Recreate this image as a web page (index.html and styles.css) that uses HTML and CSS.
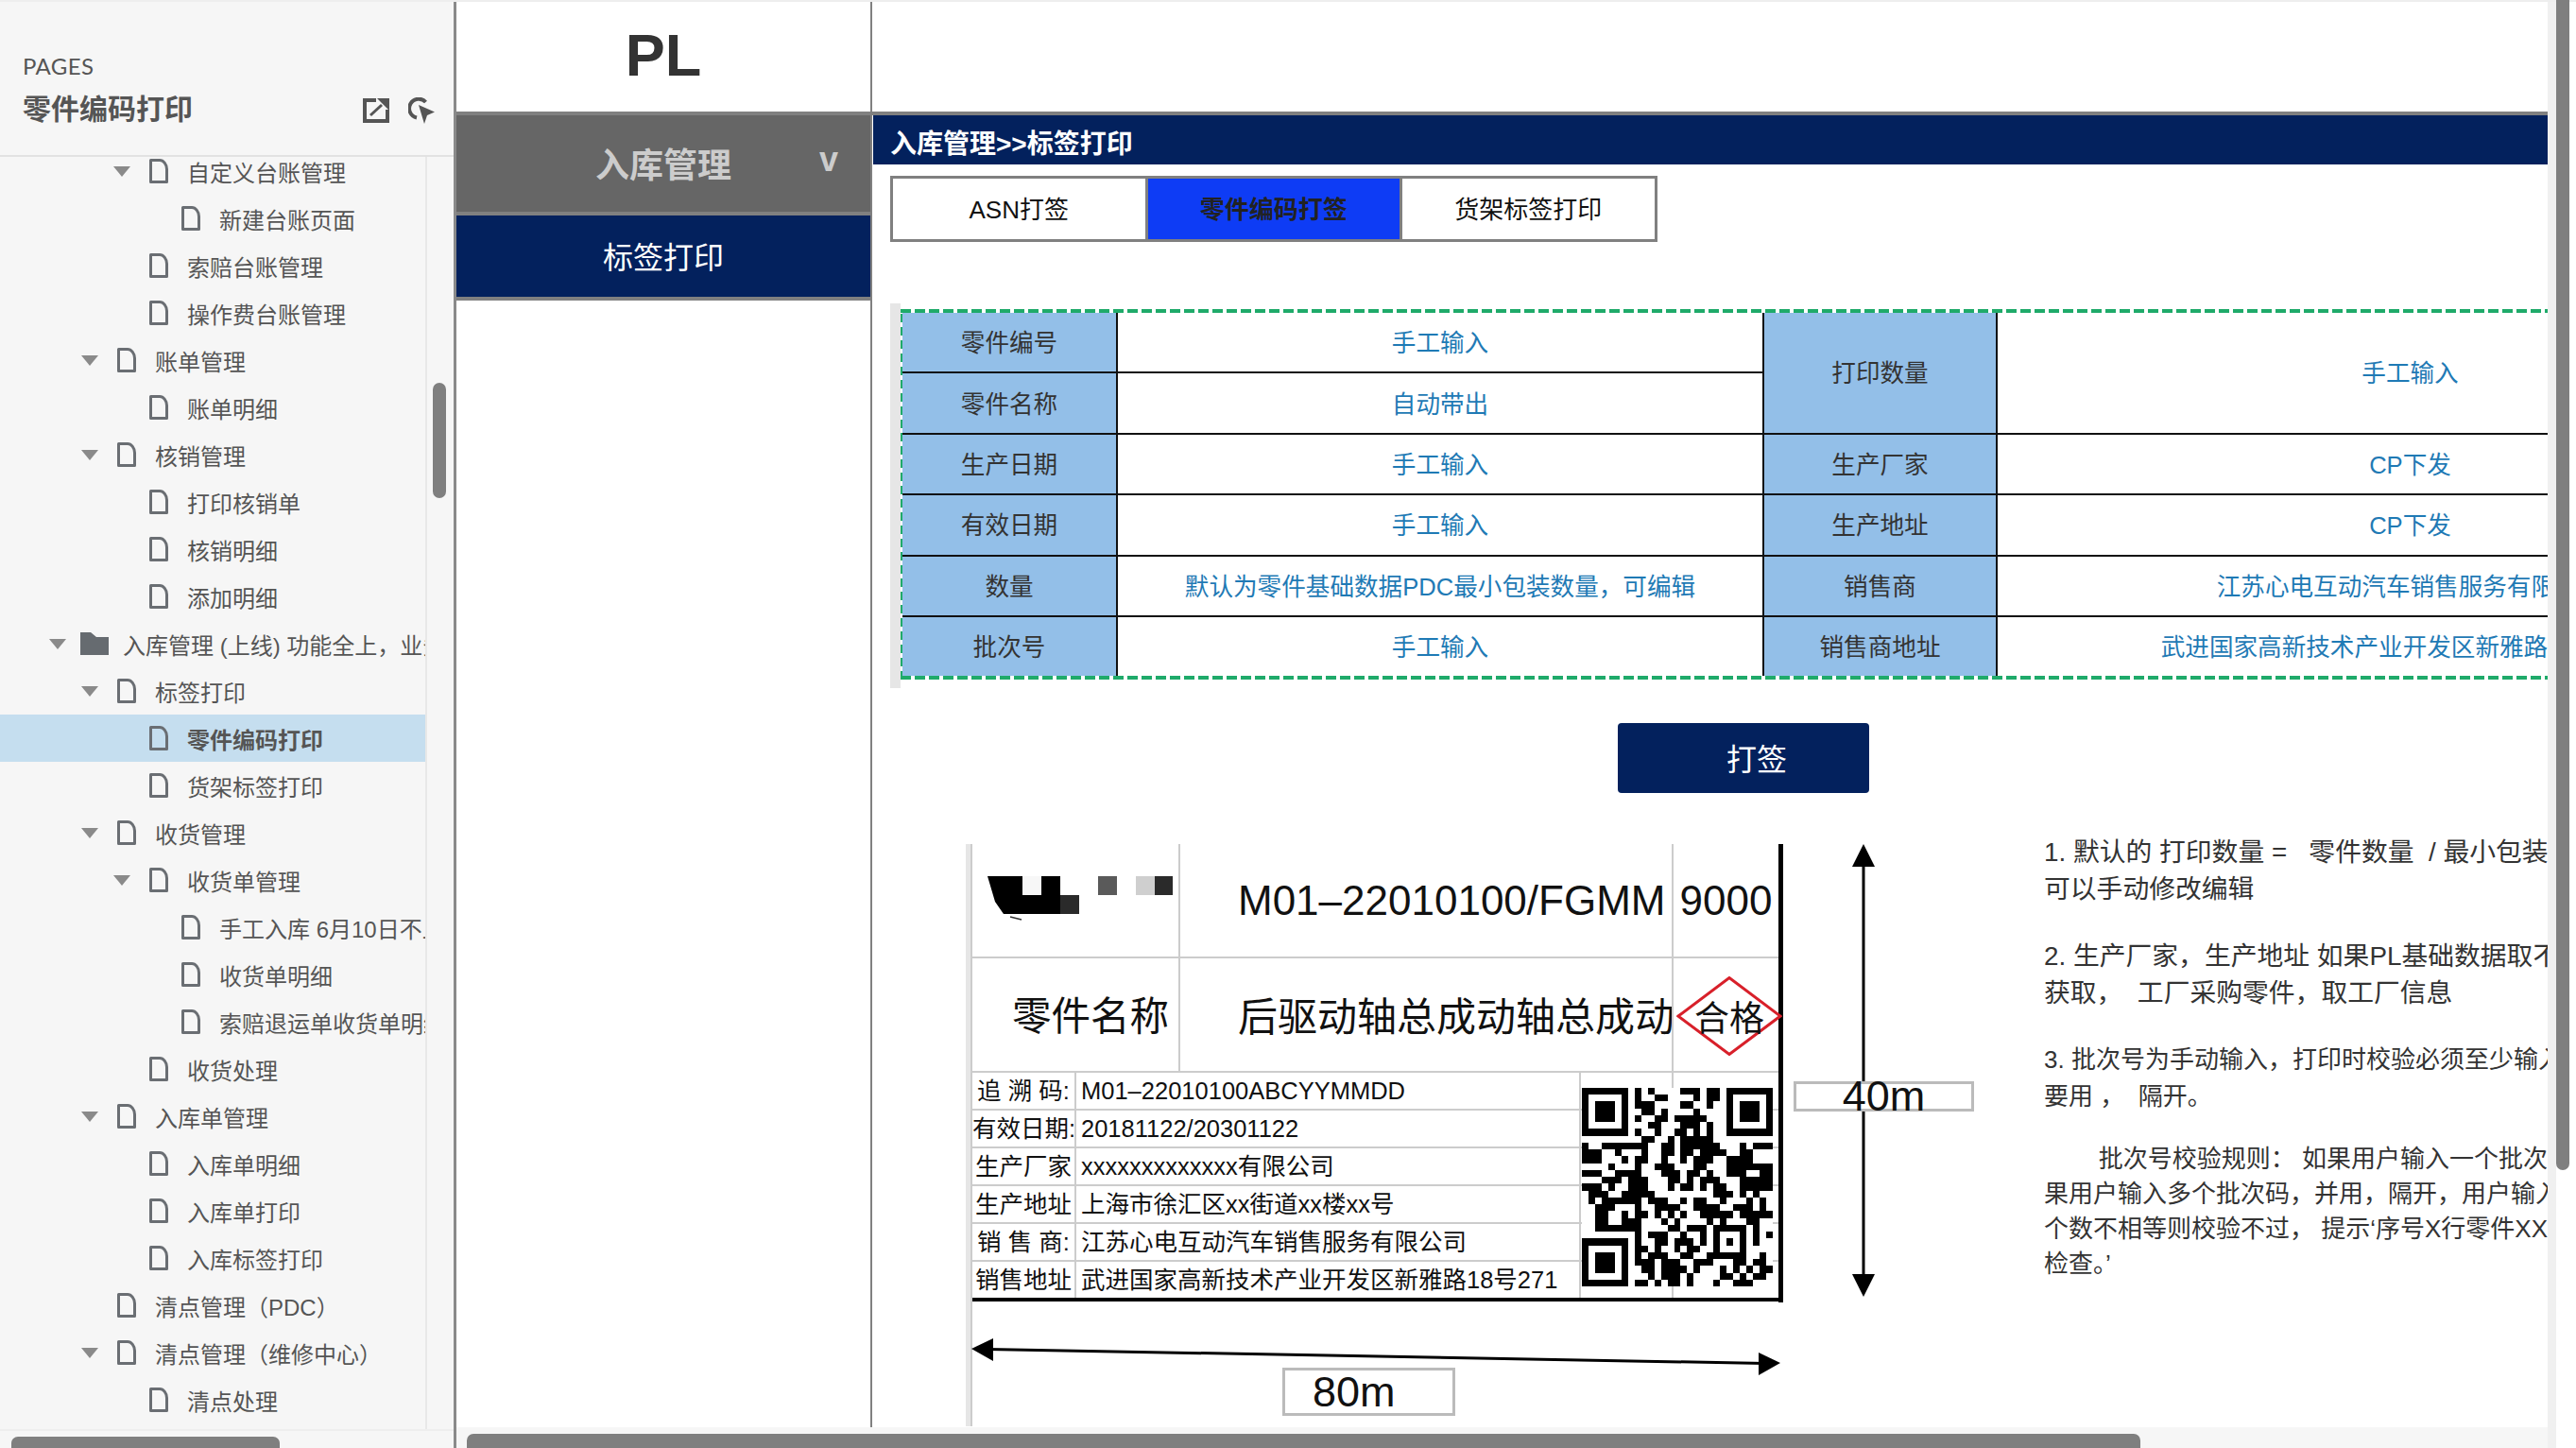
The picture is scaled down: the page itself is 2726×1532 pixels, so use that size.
FILE: index.html
```html
<!DOCTYPE html>
<html lang="zh-CN">
<head>
  <meta charset="UTF-8">
  <title>零件编码打印</title>
  <link rel="stylesheet" href="styles.css">
</head>
<body>
  <svg class="defs" width="0" height="0">
    <symbol id="file" viewBox="0 0 20 26">
      <path d="M1.5 1.5H11C15 1.5 18.5 6 18.5 11V24.5H1.5Z" fill="none" stroke="#6a6e73" stroke-width="3" stroke-linejoin="round"/>
    </symbol>
    <symbol id="folder" viewBox="0 0 30 24">
      <path d="M0 0H11L17 5H30V24H0Z" fill="#666b70"/>
    </symbol>
  </svg>

  <div class="app">
    <!-- Pages panel -->
    <aside class="pages">
      <div class="pages-head">
        <div class="pages-label">PAGES</div>
        <div class="pages-title-row">
          <div class="pages-title">零件编码打印</div>
          <svg class="head-icon" width="28" height="26" viewBox="0 0 28 26">
            <path d="M14 2H2V24H26V12" fill="none" stroke="#555" stroke-width="4"/>
            <path d="M15 0H28V13Z" fill="#555"/>
            <path d="M8 18L20 7" stroke="#555" stroke-width="3"/>
          </svg>
          <svg class="head-icon" width="28" height="28" viewBox="0 0 28 28">
            <path d="M18.5 5A10 10 0 1 0 9 21.5" fill="none" stroke="#555" stroke-width="4"/>
            <path d="M11 8L28 15.5L20 19L17 28Z" fill="#555"/>
          </svg>
        </div>
      </div>
      <div class="tree-box">
        <div class="tree">
          <div class="row l3"><i class="caret"></i><svg class="ico"><use href="#file"/></svg><span>自定义台账管理</span></div>
          <div class="row l4"><i class="slot"></i><svg class="ico"><use href="#file"/></svg><span>新建台账页面</span></div>
          <div class="row l3"><i class="slot"></i><svg class="ico"><use href="#file"/></svg><span>索赔台账管理</span></div>
          <div class="row l3"><i class="slot"></i><svg class="ico"><use href="#file"/></svg><span>操作费台账管理</span></div>
          <div class="row l2"><i class="caret"></i><svg class="ico"><use href="#file"/></svg><span>账单管理</span></div>
          <div class="row l3"><i class="slot"></i><svg class="ico"><use href="#file"/></svg><span>账单明细</span></div>
          <div class="row l2"><i class="caret"></i><svg class="ico"><use href="#file"/></svg><span>核销管理</span></div>
          <div class="row l3"><i class="slot"></i><svg class="ico"><use href="#file"/></svg><span>打印核销单</span></div>
          <div class="row l3"><i class="slot"></i><svg class="ico"><use href="#file"/></svg><span>核销明细</span></div>
          <div class="row l3"><i class="slot"></i><svg class="ico"><use href="#file"/></svg><span>添加明细</span></div>
          <div class="row l1"><i class="caret"></i><svg class="ico-folder"><use href="#folder"/></svg><span>入库管理 (上线) 功能全上，业务</span></div>
          <div class="row l2"><i class="caret"></i><svg class="ico"><use href="#file"/></svg><span>标签打印</span></div>
          <div class="row l3 selected"><i class="slot"></i><svg class="ico"><use href="#file"/></svg><span>零件编码打印</span></div>
          <div class="row l3"><i class="slot"></i><svg class="ico"><use href="#file"/></svg><span>货架标签打印</span></div>
          <div class="row l2"><i class="caret"></i><svg class="ico"><use href="#file"/></svg><span>收货管理</span></div>
          <div class="row l3"><i class="caret"></i><svg class="ico"><use href="#file"/></svg><span>收货单管理</span></div>
          <div class="row l4"><i class="slot"></i><svg class="ico"><use href="#file"/></svg><span>手工入库 6月10日不上线</span></div>
          <div class="row l4"><i class="slot"></i><svg class="ico"><use href="#file"/></svg><span>收货单明细</span></div>
          <div class="row l4"><i class="slot"></i><svg class="ico"><use href="#file"/></svg><span>索赔退运单收货单明细</span></div>
          <div class="row l3"><i class="slot"></i><svg class="ico"><use href="#file"/></svg><span>收货处理</span></div>
          <div class="row l2"><i class="caret"></i><svg class="ico"><use href="#file"/></svg><span>入库单管理</span></div>
          <div class="row l3"><i class="slot"></i><svg class="ico"><use href="#file"/></svg><span>入库单明细</span></div>
          <div class="row l3"><i class="slot"></i><svg class="ico"><use href="#file"/></svg><span>入库单打印</span></div>
          <div class="row l3"><i class="slot"></i><svg class="ico"><use href="#file"/></svg><span>入库标签打印</span></div>
          <div class="row l2"><i class="slot"></i><svg class="ico"><use href="#file"/></svg><span>清点管理（PDC）</span></div>
          <div class="row l2"><i class="caret"></i><svg class="ico"><use href="#file"/></svg><span>清点管理（维修中心）</span></div>
          <div class="row l3"><i class="slot"></i><svg class="ico"><use href="#file"/></svg><span>清点处理</span></div>
        </div>
        <div class="tree-thumb"></div>
      </div>
      <div class="pages-foot"><div class="pages-foot-thumb"></div></div>
    </aside>

    <div class="canvas">
      <div class="canvas-body">
        <!-- Left menu of the page -->
        <nav class="menu">
          <div class="menu-logo">PL</div>
          <div class="menu-group">入库管理<span class="menu-arrow">v</span></div>
          <div class="menu-item">标签打印</div>
        </nav>

        <main class="main">
          <div class="main-top"></div>
          <div class="crumb">入库管理&gt;&gt;标签打印</div>
          <div class="tabs">
            <div class="tab">ASN打签</div>
            <div class="tab active">零件编码打签</div>
            <div class="tab">货架标签打印</div>
          </div>

          <div class="sheet">
            <div class="sheet-dash">
              <table class="sheet-table">
                <colgroup>
                  <col class="c1"><col class="c2"><col class="c3"><col class="c4">
                </colgroup>
                <tr><th>零件编号</th><td>手工输入</td><th rowspan="2">打印数量</th><td rowspan="2">手工输入</td></tr>
                <tr><th>零件名称</th><td>自动带出</td></tr>
                <tr><th>生产日期</th><td>手工输入</td><th>生产厂家</th><td>CP下发</td></tr>
                <tr><th>有效日期</th><td>手工输入</td><th>生产地址</th><td>CP下发</td></tr>
                <tr><th>数量</th><td>默认为零件基础数据PDC最小包装数量，可编辑</td><th>销售商</th><td>江苏心电互动汽车销售服务有限公司</td></tr>
                <tr><th>批次号</th><td>手工输入</td><th>销售商地址</th><td>武进国家高新技术产业开发区新雅路18号271&nbsp;&nbsp;&nbsp;</td></tr>
              </table>
            </div>
          </div>

          <div class="print-row"><button class="print-btn">打签</button></div>

          <div class="lower">
            <div class="label-rail">
              <div class="label-line">
                <div class="label">
                  <div class="label-top">
                    <div class="lt-cell">
                      <svg class="mosaic" width="200" height="52" viewBox="0 0 200 52">
                        <path d="M0 0H37V20H17V40L8 27Z" fill="#000"/>
                        <rect x="17" y="20" width="60" height="20" fill="#000"/>
                        <rect x="37" y="0" width="20" height="20" fill="#f7f7f7"/>
                        <rect x="57" y="0" width="20" height="20" fill="#000"/>
                        <rect x="77" y="20" width="20" height="20" fill="#2a2a2a"/>
                        <rect x="117" y="0" width="20" height="20" fill="#5a5a5a"/>
                        <rect x="157" y="0" width="20" height="20" fill="#cfcfcf"/>
                        <path d="M177 0H196V20H177Z" fill="#2a2a2a"/>
                        <path d="M24 43L36 46" stroke="#333" stroke-width="1.5"/>
                      </svg>
                    </div>
                    <div class="lt-cell big pad">M01–22010100/FGMM</div>
                    <div class="lt-cell big center">9000</div>
                  </div>
                  <div class="label-top">
                    <div class="lt-cell name-cap">零件名称</div>
                    <div class="lt-cell name pad">后驱动轴总成动轴总成动</div>
                    <div class="lt-cell"></div>
                  </div>
                  <div class="lr"><div>追 溯 码:</div><div>M01–22010100ABCYYMMDD</div><div></div><div></div></div>
                  <div class="lr"><div>有效日期:</div><div>20181122/20301122</div><div></div><div></div></div>
                  <div class="lr"><div>生产厂家</div><div>xxxxxxxxxxxxx有限公司</div><div></div><div></div></div>
                  <div class="lr"><div>生产地址</div><div>上海市徐汇区xx街道xx楼xx号</div><div></div><div></div></div>
                  <div class="lr"><div>销 售 商:</div><div>江苏心电互动汽车销售服务有限公司</div><div></div><div></div></div>
                  <div class="lr last"><div>销售地址</div><div>武进国家高新技术产业开发区新雅路18号271</div><div></div><div></div></div>

                  <div class="stamp">
                    <svg width="112" height="84" viewBox="0 0 112 84"><path d="M2 42L56 1.5L110 42L56 82.5Z" fill="#fff" stroke="#d8202a" stroke-width="3"/></svg>
                    <span>合格</span>
                  </div>

                  <svg class="qr" viewBox="0 0 29 29" preserveAspectRatio="none" shape-rendering="crispEdges">
                    <path fill-rule="evenodd" d="M0 0h7v7h-7zM1 1v5h5v-5zM2 2h3v3h-3zM22 0h7v7h-7zM23 1v5h5v-5zM24 2h3v3h-3zM0 22h7v7h-7zM1 23v5h5v-5zM2 24h3v3h-3z"/>
                    <path fill="none" stroke="#000" d="M8 .5h1M10 .5h1M15 .5h3M19 .5h2M8 1.5h1M11 1.5h2M17 1.5h1M19 1.5h2M8 2.5h3M15 2.5h2M19 2.5h1M9 3.5h2M12 3.5h1M17 3.5h1M8 4.5h1M11 4.5h2M14 4.5h5M10 5.5h2M15 5.5h3M19 5.5h1M8 6.5h1M11 6.5h1M14 6.5h2M17 6.5h1M19 6.5h1M9 7.5h2M13 7.5h1M15 7.5h5M0 8.5h1M3 8.5h7M12 8.5h2M15 8.5h6M24 8.5h1M26 8.5h3M0 9.5h3M5 9.5h1M9 9.5h1M12 9.5h2M15 9.5h2M18 9.5h4M24 9.5h2M0 10.5h3M6 10.5h1M8 10.5h2M12 10.5h1M15 10.5h1M17 10.5h3M22 10.5h4M4 11.5h1M8 11.5h1M11 11.5h3M17 11.5h2M22 11.5h7M0 12.5h3M5 12.5h4M12 12.5h3M16 12.5h2M19 12.5h1M22 12.5h3M27 12.5h2M3 13.5h3M7 13.5h3M13 13.5h2M16 13.5h1M18 13.5h3M24 13.5h5M0 14.5h3M4 14.5h1M7 14.5h3M13 14.5h1M15 14.5h2M18 14.5h1M20 14.5h2M24 14.5h5M1 15.5h3M6 15.5h5M20 15.5h3M24 15.5h1M26 15.5h1M1 16.5h1M3 16.5h6M10 16.5h3M15 16.5h1M17 16.5h2M21 16.5h1M25 16.5h1M27 16.5h1M2 17.5h3M8 17.5h1M11 17.5h4M17 17.5h4M23 17.5h3M27 17.5h1M2 18.5h2M6 18.5h1M8 18.5h2M11 18.5h1M13 18.5h1M15 18.5h1M18 18.5h5M24 18.5h5M2 19.5h2M6 19.5h3M12 19.5h1M14 19.5h1M19 19.5h1M21 19.5h1M25 19.5h2M2 20.5h7M13 20.5h2M16 20.5h3M20 20.5h5M26 20.5h1M8 21.5h1M10 21.5h3M15 21.5h1M18 21.5h1M20 21.5h1M24 21.5h1M26 21.5h1M28 21.5h1M8 22.5h1M11 22.5h2M14 22.5h3M18 22.5h1M20 22.5h1M22 22.5h1M24 22.5h1M26 22.5h1M8 23.5h2M11 23.5h1M14 23.5h1M16 23.5h2M20 23.5h1M24 23.5h1M8 24.5h1M10 24.5h3M15 24.5h2M19 24.5h6M27 24.5h1M8 25.5h3M12 25.5h3M17 25.5h3M23 25.5h2M26 25.5h2M9 26.5h2M12 26.5h4M17 26.5h1M21 26.5h1M23 26.5h1M25 26.5h1M27 26.5h2M10 27.5h1M12 27.5h3M16 27.5h1M21 27.5h2M24 27.5h1M26 27.5h2M8 28.5h2M11 28.5h1M13 28.5h2M16 28.5h1M20 28.5h1M23 28.5h3"/>
                  </svg>
                </div>
              </div>
            </div>

            <div class="notes">
              <p>1. 默认的 打印数量 =&nbsp;&nbsp; 零件数量&nbsp; / 最小包装<br>可以手动修改编辑</p>
              <p>2. 生产厂家，生产地址 如果PL基础数据取不<br>获取，&nbsp; 工厂采购零件，取工厂信息</p>
              <p class="small">3. 批次号为手动输入，打印时校验必须至少输入<br>要用 ，&nbsp; 隔开。</p>
              <p class="small tight">&nbsp;&nbsp;&nbsp;&nbsp;&nbsp;&nbsp;&nbsp;&nbsp;批次号校验规则：&nbsp;如果用户输入一个批次<br>果用户输入多个批次码，并用，隔开，用户输入<br>个数不相等则校验不过，&nbsp;提示‘序号X行零件XX<br>检查。’</p>
            </div>

            <!-- Dimension arrows, in page coordinates -->
            <svg class="dims" width="1773" height="630" viewBox="923 880 1773 630">
              <path d="M1972 910V1358" stroke="#000" stroke-width="3"/>
              <path d="M1972 894L1984 918H1960Z"/>
              <path d="M1972 1373L1984 1349H1960Z"/>
              <path d="M1045 1428.5L1868 1443.5" stroke="#000" stroke-width="3"/>
              <path d="M1028 1428L1051 1417V1441Z"/>
              <path d="M1884 1443L1861 1432V1456Z"/>
            </svg>
            <div class="dim-box dim-40">40m</div>
            <div class="dim-box dim-80">80m</div>
          </div>
        </main>
      </div>
      <div class="hbar"><div class="hbar-thumb"></div></div>
    </div>

    <div class="vbar"><div class="vbar-thumb"></div></div>
  </div>
</body>
</html>
```
FILE: styles.css
```css
html, body {
  margin: 0;
  padding: 0;
  height: 100%;
  overflow: hidden;
  background: #fff;
  font-family: "Liberation Sans", "Noto Sans CJK SC", sans-serif;
}

.defs {
  position: absolute;
}

.app {
  display: flex;
  height: 1532px;
  box-sizing: border-box;
  border-top: 2px solid #eee;
}

/* Pages panel */
.pages {
  width: 483px;
  flex: none;
  box-sizing: border-box;
  display: flex;
  flex-direction: column;
  background: #f6f6f6;
  border-right: 3px solid #8a8a8a;
}

.pages-head {
  height: 164px;
  flex: none;
  box-sizing: border-box;
  padding: 52px 20px 0 24px;
  border-bottom: 2px solid #e2e2e2;
  color: #555;
}

.pages-label {
  font-family: Lato, "Liberation Sans", sans-serif;
  font-size: 24px;
  line-height: 32px;
  letter-spacing: 0.4px;
}

.pages-title-row {
  display: flex;
  align-items: center;
  margin-top: 10px;
  gap: 20px;
}

.pages-title {
  font-size: 30px;
  line-height: 40px;
  font-weight: bold;
  margin-right: auto;
}

.head-icon {
  flex: none;
  position: relative;
  top: 1px;
}

.tree-box {
  flex: 1;
  min-height: 0;
  position: relative;
  overflow: hidden;
}

.tree {
  width: 450px;
  height: 100%;
  overflow: hidden;
  border-right: 2px solid #e8e8e8;
}

.row {
  display: flex;
  align-items: center;
  height: 50px;
  box-sizing: border-box;
  color: #555;
  font-size: 24px;
  white-space: nowrap;
}

.row:first-child {
  margin-top: -10px;
}

.row.l1 { padding-left: 52px; }
.row.l2 { padding-left: 86px; }
.row.l3 { padding-left: 120px; }
.row.l4 { padding-left: 154px; }

.row.selected {
  background: #c5deef;
  font-weight: bold;
}

.caret {
  flex: none;
  width: 0;
  height: 0;
  margin-right: 20px;
  border-left: 9px solid transparent;
  border-right: 9px solid transparent;
  border-top: 11px solid #8a8a8a;
}

.slot {
  flex: none;
  width: 38px;
}

.ico {
  flex: none;
  width: 20px;
  height: 26px;
  margin-right: 20px;
}

.l1 .caret {
  margin-right: 15px;
}

.ico-folder {
  flex: none;
  width: 30px;
  height: 24px;
  margin-right: 15px;
}

.tree-thumb {
  position: absolute;
  left: 458px;
  top: 239px;
  width: 14px;
  height: 122px;
  border-radius: 7px;
  background: #7f7f7f;
}

.pages-foot {
  height: 20px;
  flex: none;
  box-sizing: border-box;
  padding: 6px 0 0 12px;
  border-top: 2px solid #eee;
}

.pages-foot-thumb {
  width: 284px;
  height: 14px;
  border-radius: 7px 7px 0 0;
  background: #7f7f7f;
}

/* Page canvas */
.canvas {
  flex: 1;
  min-width: 0;
  display: flex;
  flex-direction: column;
}

.canvas-body {
  flex: 1;
  min-height: 0;
  display: flex;
}

.hbar {
  height: 22px;
  flex: none;
  box-sizing: border-box;
  padding: 7px 0 0 11px;
  background: #f6f6f6;
}

.hbar-thumb {
  width: 1771px;
  height: 15px;
  border-radius: 7px 7px 0 0;
  background: #7f7f7f;
}

.vbar {
  width: 30px;
  flex: none;
  position: relative;
  box-sizing: border-box;
  border-left: 9px solid #f0f0f0;
}

.vbar-thumb {
  position: absolute;
  left: 0;
  top: -2px;
  width: 14px;
  height: 1238px;
  border-radius: 0 0 7px 7px;
  background: #7f7f7f;
}

/* Left menu */
.menu {
  width: 440px;
  flex: none;
  box-sizing: border-box;
  border-right: 2px solid #808080;
  display: flex;
  flex-direction: column;
  align-items: stretch;
}

.menu-logo {
  height: 116px;
  flex: none;
  box-sizing: border-box;
  padding-bottom: 4px;
  display: flex;
  align-items: center;
  justify-content: center;
  font-size: 63px;
  font-weight: bold;
  color: #333;
}

.menu-group {
  height: 110px;
  flex: none;
  box-sizing: border-box;
  padding-bottom: 3px;
  position: relative;
  display: flex;
  align-items: center;
  justify-content: center;
  border-top: 4px solid #808080;
  border-bottom: 4px solid #808080;
  background: #666;
  color: #ccc;
  font-size: 36px;
  font-weight: bold;
}

.menu-arrow {
  position: absolute;
  left: 384px;
  top: 25px;
  font-size: 36px;
  line-height: 44px;
}

.menu-item {
  height: 90px;
  flex: none;
  box-sizing: border-box;
  padding-bottom: 3px;
  display: flex;
  align-items: center;
  justify-content: center;
  border-bottom: 4px solid #808080;
  background: #03215d;
  color: #fff;
  font-size: 32px;
}

/* Main */
.main {
  flex: 1;
  min-width: 0;
  overflow: hidden;
}

.main-top {
  height: 120px;
  box-sizing: border-box;
  border-bottom: 4px solid #808080;
}

.crumb {
  height: 52px;
  line-height: 62px;
  overflow: hidden;
  margin-left: 1px;
  padding-left: 18px;
  background: #03215d;
  color: #fff;
  font-size: 28px;
  font-weight: bold;
  white-space: nowrap;
}

.tabs {
  display: flex;
  margin: 12px 0 0 19px;
}

.tab {
  width: 266.5px;
  height: 61px;
  padding-bottom: 3px;
  display: flex;
  align-items: center;
  justify-content: center;
  border: 3px solid #808080;
  margin-right: -3px;
  font-size: 26px;
  color: #111;
  background: #fff;
}

.tab.active {
  background: #0e3cf5;
  color: #222;
  font-weight: bold;
}

.sheet {
  width: 2044px;
  margin: 65px 0 0 19px;
  padding: 6px 0 9px;
  box-sizing: border-box;
  border-left: 11px solid #e6e6e6;
  background: #fff;
}

.sheet-dash {
  padding: 4px 0 4px 2px;
  background-image:
    repeating-linear-gradient(90deg, #1faa6a 0 11px, transparent 11px 15px),
    repeating-linear-gradient(90deg, #1faa6a 0 11px, transparent 11px 15px),
    repeating-linear-gradient(0deg, #1faa6a 0 9px, transparent 9px 14px);
  background-size: 100% 4px, 100% 4px, 2px 100%;
  background-position: 0 0, 0 100%, 0 0;
  background-repeat: no-repeat;
}

.sheet-table {
  width: 2033px;
  table-layout: fixed;
  border-collapse: collapse;
  font-size: 25.6px;
}

.c1 { width: 227px; }
.c2 { width: 684px; }
.c3 { width: 247px; }
.c4 { width: 875px; }

.sheet-table th,
.sheet-table td {
  height: 59.4px;
  padding: 0 0 3px;
  font-weight: normal;
  text-align: center;
  white-space: nowrap;
  overflow: hidden;
  border-top: 2px solid #111;
}

.sheet-table tr:first-child th,
.sheet-table tr:first-child td {
  border-top: 0;
}

.sheet-table th {
  background: #93bfe8;
  color: #333;
  border-right: 2px solid #111;
}

.sheet-table td {
  color: #1f7ab5;
  border-right: 2px solid #111;
}

.print-row {
  display: flex;
  margin: 37px 0 0 789px;
}

.print-btn {
  width: 266px;
  height: 74px;
  padding: 0 0 2px 28px;
  border: 0;
  border-radius: 4px;
  background: #03215d;
  color: #fff;
  font-family: inherit;
  font-size: 32px;
}

/* Label preview */
.lower {
  position: relative;
  display: flex;
  height: 630px;
  margin-top: 40px;
}

.label-rail {
  width: 1141px;
  flex: none;
  box-sizing: border-box;
  margin: 14px 0 0 99px;
  border-left: 5px solid #e6e6e6;
}

.label-line {
  height: 100%;
  border-left: 2px solid #ccc;
}

.label {
  position: relative;
  width: 858px;
  box-sizing: border-box;
  border-right: 5px solid #000;
  color: #111;
  height: 485px;
}

.label-top {
  display: grid;
  grid-template-columns: 220px 522px 111px;
  height: 121px;
  box-sizing: border-box;
  border-bottom: 2px solid #ccc;
}

.lt-cell {
  display: flex;
  align-items: center;
  min-width: 0;
  overflow: hidden;
  white-space: nowrap;
  box-sizing: border-box;
  border-right: 2px solid #ccc;
}

.lt-cell:last-child {
  border-right: 0;
}

.mosaic {
  margin-left: 16px;
  flex: none;
}

.big {
  font-size: 44px;
}

.center {
  justify-content: center;
  font-size: 44px;
}

.pad {
  padding-left: 61px;
}

.name-cap {
  font-size: 41.5px;
  justify-content: flex-end;
  padding: 0 10px 3px 0;
}

.name {
  font-size: 42px;
  padding-bottom: 3px;
}

.lr {
  display: grid;
  grid-template-columns: 110px 534px 98px 111px;
  height: 40px;
  box-sizing: border-box;
  border-bottom: 2px solid #ccc;
  font-size: 25.5px;
  line-height: 38px;
  white-space: nowrap;
}

.lr > div {
  box-sizing: border-box;
  border-right: 2px solid #ccc;
  overflow: hidden;
}

.lr > div:first-child {
  text-align: center;
}

.lr > div:nth-child(2) {
  padding-left: 5px;
}

.lr > div:last-child {
  border-right: 0;
}

.lr.last {
  height: 42px;
  border-bottom: 4px solid #000;
  margin-right: -5px;
}

.stamp {
  position: absolute;
  left: 745px;
  top: 140px;
  width: 112px;
  height: 84px;
  display: flex;
  align-items: center;
  justify-content: center;
}

.stamp svg {
  position: absolute;
  left: 0;
  top: 0;
}

.stamp span {
  position: relative;
  font-size: 37px;
}

.qr {
  position: absolute;
  left: 645px;
  top: 258px;
  width: 202px;
  height: 210px;
  background: #fff;
}

.notes {
  flex: none;
  width: 540px;
  padding-top: 3px;
  color: #333;
  font-size: 27.8px;
  line-height: 39px;
  white-space: nowrap;
}

.notes p {
  margin: 0 0 32px;
}

.notes p.small {
  font-size: 26px;
}

.notes p.tight {
  margin-top: -4px;
  line-height: 37px;
}

.dims {
  position: absolute;
  left: 0;
  top: 0;
  pointer-events: none;
}

.dim-box {
  position: absolute;
  box-sizing: border-box;
  border: 3px solid #bbb;
  background: #fff;
  color: #111;
  font-size: 45px;
  white-space: nowrap;
}

.dim-40 {
  left: 975px;
  top: 265px;
  width: 191px;
  height: 32px;
  line-height: 26px;
  text-align: center;
}

.dim-80 {
  left: 434px;
  top: 568px;
  width: 183px;
  height: 51px;
  line-height: 45px;
  padding-left: 29px;
}
```
